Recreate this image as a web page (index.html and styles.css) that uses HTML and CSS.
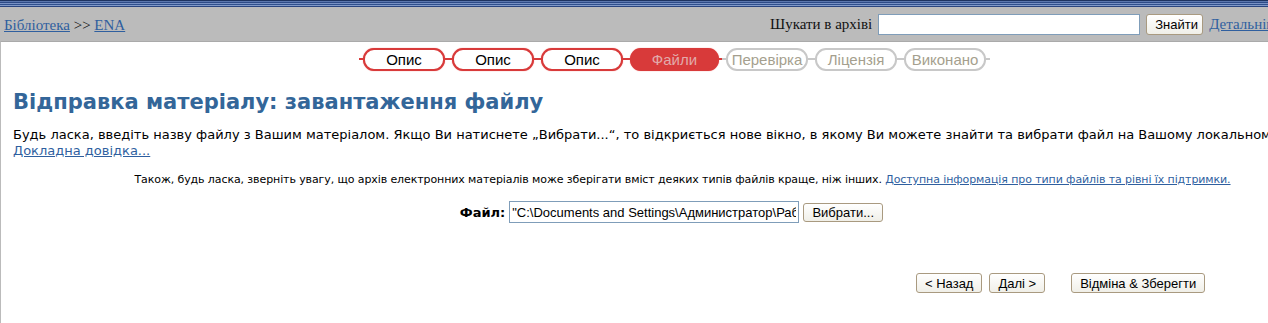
FILE: index.html
```html
<!DOCTYPE html>
<html lang="uk">
<head>
    <meta charset="UTF-8">
    <title>Відправка матеріалу</title>
    <link rel="stylesheet" href="styles.css">
</head>
<body>
    <div class="stripe"></div>
    <div class="topbar">
        <div class="crumbs">
            <a href="#">Бібліотека</a> &gt;&gt; <a href="#">ENA</a>
        </div>
        <form class="search">
            <label for="q">Шукати в архіві</label>
            <input type="text" id="q">
            <button type="button">Знайти</button>
            <a href="#">Детальніше</a>
        </form>
    </div>

    <div class="page">
        <div class="steps">
            <span class="step done">Опис</span>
            <span class="step done">Опис</span>
            <span class="step done">Опис</span>
            <span class="step current">Файли</span>
            <span class="step todo">Перевірка</span>
            <span class="step todo">Ліцензія</span>
            <span class="step todo">Виконано</span>
        </div>

        <h1>Відправка матеріалу: завантаження файлу</h1>

        <p class="intro">Будь ласка, введіть назву файлу з Вашим матеріалом. Якщо Ви натиснете „Вибрати...“, то відкриється нове вікно, в якому Ви можете знайти та вибрати файл на Вашому локальному комп'ютері.<br>
            <a href="#">Докладна довідка...</a></p>

        <p class="note">Також, будь ласка, зверніть увагу, що архів електронних матеріалів може зберігати вміст деяких типів файлів краще, ніж інших. <a href="#">Доступна інформація про типи файлів та рівні їх підтримки.</a></p>

        <div class="file-row">
            <label for="file">Файл:</label>
            <input type="text" id="file" value="&quot;C:\Documents and Settings\Администратор\Рабочий стол\ena.pdf&quot;">
            <button type="button">Вибрати...</button>
        </div>

        <div class="actions">
            <button type="button">&lt; Назад</button>
            <button type="button">Далі &gt;</button>
            <button type="button" class="save">Відміна &amp; Зберегти</button>
        </div>
    </div>
</body>
</html>
```

FILE: styles.css
```css
html, body {
    margin: 0;
    overflow: hidden;
    background-color: #fff;
}
body {
    width: 1342px;
    font-family: "DejaVu Sans", Verdana, sans-serif;
}
a {
    color: #2f5f9f;
}
.stripe {
    height: 7px;
    background: linear-gradient(#1e3360 0 1px, #5a76ad 1px 2px, #2d4a86 2px 3px, #7891c4 3px 4px, #30508c 4px 5px, #8199c8 5px 6px, #2a4580 6px 7px);
}
.topbar {
    height: 34px;
    background-color: #bbbbbb;
    display: flex;
    align-items: center;
    justify-content: space-between;
    font-family: "Liberation Serif", "Times New Roman", serif;
    font-size: 15px;
    color: #111;
}
.crumbs {
    padding: 3px 0 0 4px;
}
.search {
    display: flex;
    align-items: center;
    margin: 0;
    padding-top: 1px;
    width: 572px;
    white-space: nowrap;
}
.search label {
    margin-right: 6px;
}
.search input {
    width: 256px;
    height: 15px;
    padding: 2px;
    border: 1px solid #7f9db9;
    margin: 0 6px 0 0;
}
.search button, .file-row button, .actions button {
    font-family: "Liberation Sans", Arial, sans-serif;
    font-size: 13px;
    color: #000;
    background: linear-gradient(#ffffff, #f0efe8);
    border: 1px solid #a99a80;
    border-radius: 3px;
    padding: 0 8px;
    height: 20px;
    cursor: pointer;
}
.search button {
    width: 57px;
    height: 21px;
    margin-right: 6px;
}
.page {
    border-left: 1px solid #bbbbbb;
    border-top: 1px solid #aaaaaa;
    height: 282px;
}
.steps {
    display: flex;
    justify-content: center;
    padding: 6px 0 0 6px;
    font-family: "Liberation Sans", Arial, sans-serif;
    font-size: 15px;
}
.step {
    position: relative;
    width: 78px;
    height: 19px;
    line-height: 19px;
    text-align: center;
    border: 2px solid;
    border-radius: 11px;
    margin: 0 3.5px;
    white-space: nowrap;
}
.step::before, .step::after {
    content: "";
    position: absolute;
    top: 8px;
    width: 4px;
    height: 2px;
}
.step::before {
    left: -6px;
}
.step::after {
    right: -6px;
}
.done {
    border-color: #d83a3a;
    color: #000;
    background-color: #fff;
    box-shadow: 0 0 1px #e66;
}
.done::before, .done::after, .current::before, .current::after {
    background-color: #d83a3a;
}
.current {
    width: 85px;
    border-color: #d83a3a;
    background-color: #d83a3a;
    color: #e2aaaa;
    box-shadow: 0 0 1px #e66;
}
.todo {
    border-color: #c8c8c8;
    color: #a59f8e;
    background-color: #fff;
}
.todo::before, .todo::after {
    background-color: #c8c8c8;
}
h1 {
    margin: 19px 0 0 12px;
    font-size: 21px;
    font-weight: bold;
    color: #336699;
}
.intro {
    margin: 13px 0 0 12px;
    font-size: 13px;
    line-height: 16px;
    white-space: nowrap;
    color: #000;
}
.note {
    margin: 14px 0 0 22px;
    text-align: center;
    font-size: 11px;
    letter-spacing: -0.1px;
    color: #000;
}
.file-row {
    display: flex;
    justify-content: center;
    align-items: center;
    margin-top: 15px;
    font-size: 13px;
}
.file-row label {
    font-weight: bold;
    margin-right: 4px;
}
.file-row input {
    width: 284px;
    height: 16px;
    padding: 2px;
    border: 1px solid #7f9db9;
    font-family: "Liberation Sans", Arial, sans-serif;
    font-size: 13px;
    margin: 0 4px 0 0;
}
.file-row button {
    width: 80px;
    height: 19px;
    padding: 0 6px;
}
.actions {
    display: flex;
    gap: 7px;
    margin: 50px 0 0 915px;
}
.actions .save {
    margin-left: 19px;
}
```
